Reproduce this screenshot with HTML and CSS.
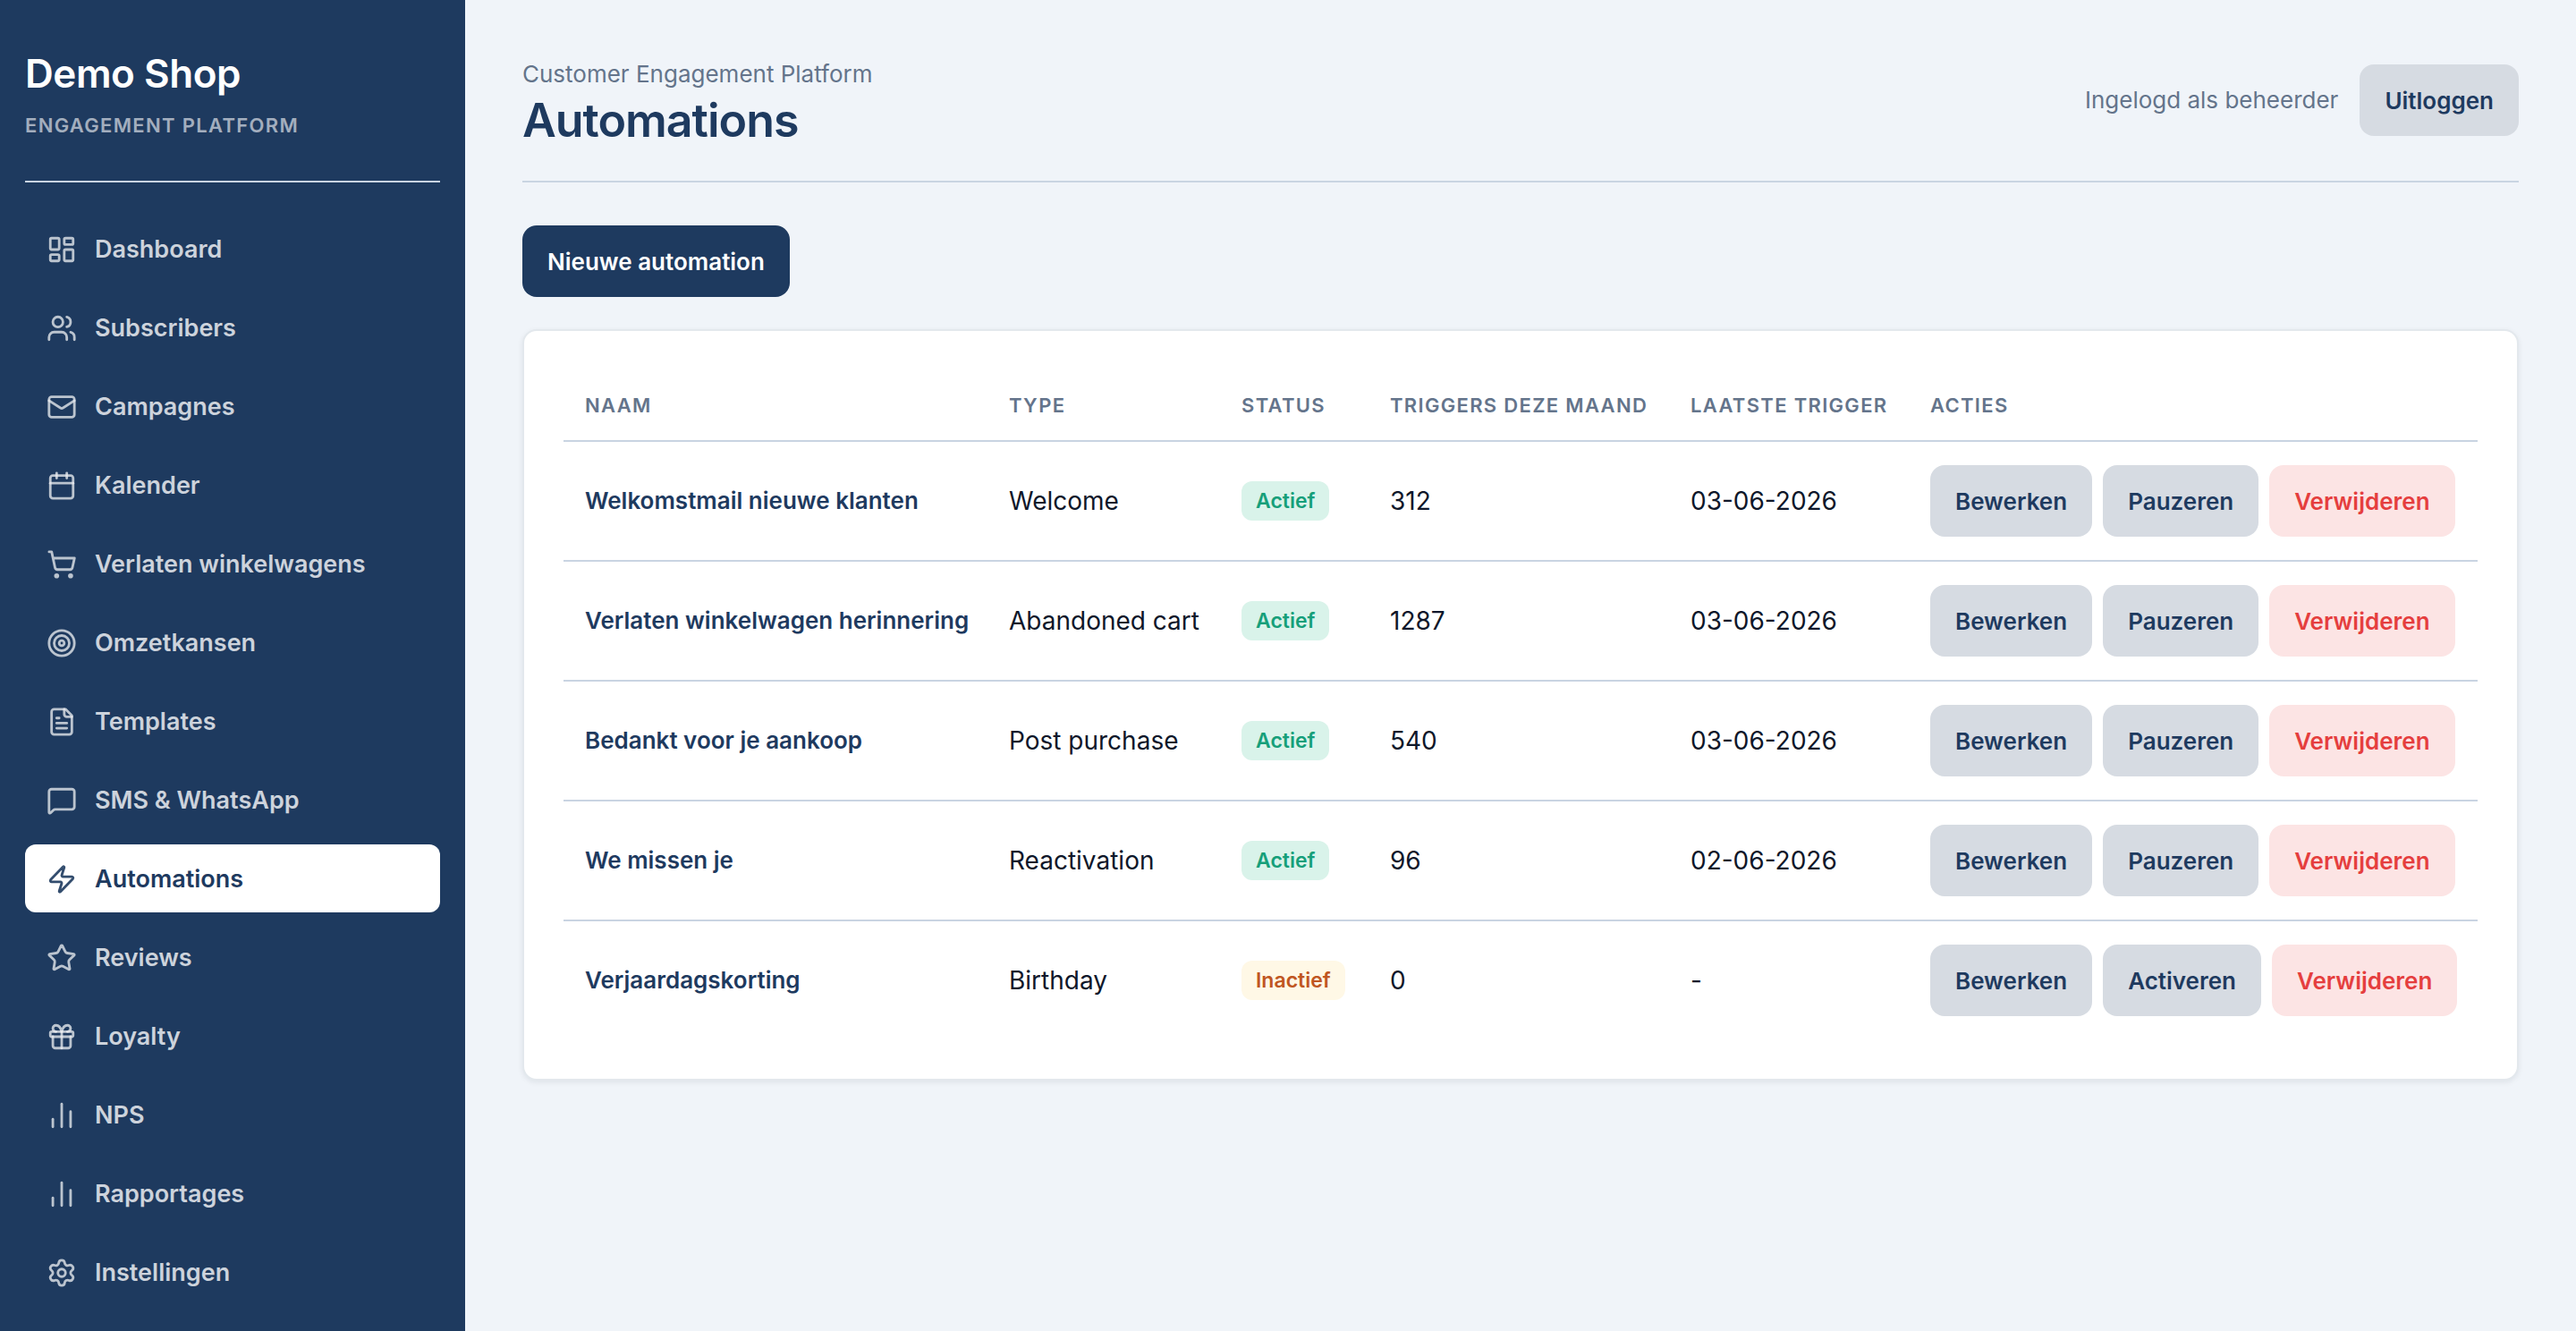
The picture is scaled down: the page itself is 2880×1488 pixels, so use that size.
FILE: index.html
```html
<!DOCTYPE html>
<html lang="nl">
<head>
<meta charset="utf-8">
<meta name="viewport" content="width=device-width, initial-scale=1">
<title>Automations - Demo Shop</title>
<link rel="stylesheet" href="styles.css">
</head>
<body>
<div class="app">
  <aside class="sidebar">
    <div class="brand">
      <p class="brand-name">Demo Shop</p>
      <p class="brand-tag">Engagement platform</p>
    </div>
    <nav class="nav" aria-label="Hoofdmenu">
      <a class="nav-link" href="#dashboard">
        <svg class="icon" viewBox="0 0 24 24"><rect x="3" y="3" width="7" height="9" rx="1"/><rect x="14" y="3" width="7" height="5" rx="1"/><rect x="14" y="12" width="7" height="9" rx="1"/><rect x="3" y="16" width="7" height="5" rx="1"/></svg>
        Dashboard
      </a>
      <a class="nav-link" href="#subscribers">
        <svg class="icon" viewBox="0 0 24 24"><path d="M16 21v-2a4 4 0 0 0-4-4H6a4 4 0 0 0-4 4v2"/><circle cx="9" cy="7" r="4"/><path d="M22 21v-2a4 4 0 0 0-3-3.87"/><path d="M16 3.13a4 4 0 0 1 0 7.75"/></svg>
        Subscribers
      </a>
      <a class="nav-link" href="#campagnes">
        <svg class="icon" viewBox="0 0 24 24"><rect x="2" y="4" width="20" height="16" rx="2"/><path d="m22 7-8.97 5.7a1.94 1.94 0 0 1-2.06 0L2 7"/></svg>
        Campagnes
      </a>
      <a class="nav-link" href="#kalender">
        <svg class="icon" viewBox="0 0 24 24"><path d="M8 2v4"/><path d="M16 2v4"/><rect x="3" y="4" width="18" height="18" rx="2"/><path d="M3 10h18"/></svg>
        Kalender
      </a>
      <a class="nav-link" href="#winkelwagens">
        <svg class="icon" viewBox="0 0 24 24"><circle cx="8" cy="21" r="1"/><circle cx="19" cy="21" r="1"/><path d="M2.05 2.05h2l2.66 12.42a2 2 0 0 0 2 1.58h9.78a2 2 0 0 0 1.95-1.57l1.65-7.43H5.12"/></svg>
        Verlaten winkelwagens
      </a>
      <a class="nav-link" href="#omzetkansen">
        <svg class="icon" viewBox="0 0 24 24"><circle cx="12" cy="12" r="10"/><circle cx="12" cy="12" r="6"/><circle cx="12" cy="12" r="2"/></svg>
        Omzetkansen
      </a>
      <a class="nav-link" href="#templates">
        <svg class="icon" viewBox="0 0 24 24"><path d="M15 2H6a2 2 0 0 0-2 2v16a2 2 0 0 0 2 2h12a2 2 0 0 0 2-2V7Z"/><path d="M14 2v4a2 2 0 0 0 2 2h4"/><path d="M10 9H8"/><path d="M16 13H8"/><path d="M16 17H8"/></svg>
        Templates
      </a>
      <a class="nav-link" href="#sms-whatsapp">
        <svg class="icon" viewBox="0 0 24 24"><path d="M22 17a2 2 0 0 1-2 2H6.828a2 2 0 0 0-1.414.586l-2.202 2.202A.71.71 0 0 1 2 21.286V5a2 2 0 0 1 2-2h16a2 2 0 0 1 2 2z"/></svg>
        SMS &amp; WhatsApp
      </a>
      <a class="nav-link is-active" href="#automations" aria-current="page">
        <svg class="icon" viewBox="0 0 24 24"><path d="M4 14a1 1 0 0 1-.78-1.63l9.9-10.2a.5.5 0 0 1 .86.46l-1.92 6.02A1 1 0 0 0 13 10h7a1 1 0 0 1 .78 1.63l-9.9 10.2a.5.5 0 0 1-.86-.46l1.92-6.02A1 1 0 0 0 11 14z"/></svg>
        Automations
      </a>
      <a class="nav-link" href="#reviews">
        <svg class="icon" viewBox="0 0 24 24"><path d="M11.525 2.295a.53.53 0 0 1 .95 0l2.31 4.679a2.123 2.123 0 0 0 1.595 1.16l5.166.756a.53.53 0 0 1 .294.904l-3.736 3.638a2.123 2.123 0 0 0-.611 1.878l.882 5.14a.53.53 0 0 1-.771.56l-4.618-2.428a2.122 2.122 0 0 0-1.973 0L6.396 21.01a.53.53 0 0 1-.77-.56l.881-5.139a2.122 2.122 0 0 0-.611-1.879L2.16 9.795a.53.53 0 0 1 .294-.906l5.165-.755a2.122 2.122 0 0 0 1.597-1.16z"/></svg>
        Reviews
      </a>
      <a class="nav-link" href="#loyalty">
        <svg class="icon" viewBox="0 0 24 24"><rect x="3" y="8" width="18" height="4" rx="1"/><path d="M12 8v13"/><path d="M19 12v7a2 2 0 0 1-2 2H7a2 2 0 0 1-2-2v-7"/><path d="M7.5 8a2.5 2.5 0 0 1 0-5A4.8 8 0 0 1 12 8a4.8 8 0 0 1 4.5-5 2.5 2.5 0 0 1 0 5"/></svg>
        Loyalty
      </a>
      <a class="nav-link" href="#nps">
        <svg class="icon" viewBox="0 0 24 24"><path d="M5 21v-6"/><path d="M12 21V3"/><path d="M19 21V9"/></svg>
        NPS
      </a>
      <a class="nav-link" href="#rapportages">
        <svg class="icon" viewBox="0 0 24 24"><path d="M5 21v-6"/><path d="M12 21V3"/><path d="M19 21V9"/></svg>
        Rapportages
      </a>
      <a class="nav-link" href="#instellingen">
        <svg class="icon" viewBox="0 0 24 24"><path d="M9.671 4.136a2.34 2.34 0 0 1 4.659 0 2.34 2.34 0 0 0 3.319 1.915 2.34 2.34 0 0 1 2.33 4.033 2.34 2.34 0 0 0 0 3.831 2.34 2.34 0 0 1-2.33 4.033 2.34 2.34 0 0 0-3.319 1.915 2.34 2.34 0 0 1-4.659 0 2.34 2.34 0 0 0-3.32-1.915 2.34 2.34 0 0 1-2.33-4.033 2.34 2.34 0 0 0 0-3.831A2.34 2.34 0 0 1 6.35 6.051a2.34 2.34 0 0 0 3.319-1.915"/><circle cx="12" cy="12" r="3"/></svg>
        Instellingen
      </a>
    </nav>
  </aside>

  <main class="main">
    <header class="page-header">
      <div class="page-heading">
        <p class="eyebrow">Customer Engagement Platform</p>
        <h1 class="page-title">Automations</h1>
      </div>
      <div class="account">
        <span class="account-label">Ingelogd als beheerder</span>
        <button class="btn btn-secondary" type="button">Uitloggen</button>
      </div>
    </header>

    <a class="btn btn-primary" href="#nieuw">Nieuwe automation</a>

    <section class="card">
      <table class="table">
        <colgroup>
          <col class="col-name">
          <col class="col-type">
          <col class="col-status">
          <col class="col-triggers">
          <col class="col-last">
          <col>
        </colgroup>
        <thead>
          <tr>
            <th scope="col">Naam</th>
            <th scope="col">Type</th>
            <th scope="col">Status</th>
            <th scope="col">Triggers deze maand</th>
            <th scope="col">Laatste trigger</th>
            <th scope="col">Acties</th>
          </tr>
        </thead>
        <tbody>
          <tr>
            <td class="name">Welkomstmail nieuwe klanten</td>
            <td>Welcome</td>
            <td><span class="badge badge-active">Actief</span></td>
            <td>312</td>
            <td>03-06-2026</td>
            <td><div class="actions"><a class="btn btn-secondary" href="#bewerken">Bewerken</a><button class="btn btn-secondary" type="button">Pauzeren</button><button class="btn btn-danger" type="button">Verwijderen</button></div></td>
          </tr>
          <tr>
            <td class="name">Verlaten winkelwagen herinnering</td>
            <td>Abandoned cart</td>
            <td><span class="badge badge-active">Actief</span></td>
            <td>1287</td>
            <td>03-06-2026</td>
            <td><div class="actions"><a class="btn btn-secondary" href="#bewerken">Bewerken</a><button class="btn btn-secondary" type="button">Pauzeren</button><button class="btn btn-danger" type="button">Verwijderen</button></div></td>
          </tr>
          <tr>
            <td class="name">Bedankt voor je aankoop</td>
            <td>Post purchase</td>
            <td><span class="badge badge-active">Actief</span></td>
            <td>540</td>
            <td>03-06-2026</td>
            <td><div class="actions"><a class="btn btn-secondary" href="#bewerken">Bewerken</a><button class="btn btn-secondary" type="button">Pauzeren</button><button class="btn btn-danger" type="button">Verwijderen</button></div></td>
          </tr>
          <tr>
            <td class="name">We missen je</td>
            <td>Reactivation</td>
            <td><span class="badge badge-active">Actief</span></td>
            <td>96</td>
            <td>02-06-2026</td>
            <td><div class="actions"><a class="btn btn-secondary" href="#bewerken">Bewerken</a><button class="btn btn-secondary" type="button">Pauzeren</button><button class="btn btn-danger" type="button">Verwijderen</button></div></td>
          </tr>
          <tr>
            <td class="name">Verjaardagskorting</td>
            <td>Birthday</td>
            <td><span class="badge badge-inactive">Inactief</span></td>
            <td>0</td>
            <td>-</td>
            <td><div class="actions"><a class="btn btn-secondary" href="#bewerken">Bewerken</a><button class="btn btn-secondary" type="button">Activeren</button><button class="btn btn-danger" type="button">Verwijderen</button></div></td>
          </tr>
        </tbody>
      </table>
    </section>
  </main>
</div>
</body>
</html>
```
FILE: styles.css
```css
:root {
  --navy: #1e3a5f;
  --ink: #0f172a;
  --muted: #64748b;
  --line: #c9d4e2;
  --page: #f0f4f9;
}

*,
*::before,
*::after {
  box-sizing: border-box;
}

body {
  margin: 0;
  background: var(--page);
  color: var(--ink);
  font-family: Inter, "Liberation Sans", sans-serif;
  font-size: 28px;
  line-height: 44px;
}

p,
h1 {
  margin: 0;
}

.app {
  display: flex;
  min-height: 100vh;
}

/* Sidebar */
.sidebar {
  flex: 0 0 520px;
  padding: 56px 28px 28px;
  background: var(--navy);
}

.brand {
  padding-bottom: 48px;
  margin-bottom: 36px;
  border-bottom: 2px solid var(--line);
}

.brand-name {
  color: #fff;
  font-size: 44px;
  font-weight: 600;
  line-height: 52px;
  letter-spacing: -0.01em;
}

.brand-tag {
  margin-top: 18px;
  color: rgba(255, 255, 255, 0.6);
  font-size: 22px;
  font-weight: 600;
  line-height: 28px;
  letter-spacing: 0.06em;
  text-transform: uppercase;
}

.nav {
  display: flex;
  flex-direction: column;
  gap: 12px;
}

.nav-link {
  display: flex;
  align-items: center;
  gap: 20px;
  padding: 17px 24px 15px;
  border-radius: 12px;
  color: rgba(255, 255, 255, 0.78);
  font-size: 27px;
  font-weight: 600;
  text-decoration: none;
}

.nav-link.is-active {
  background: #fff;
  color: var(--navy);
}

.icon {
  flex: none;
  width: 34px;
  height: 34px;
  fill: none;
  stroke: currentColor;
  stroke-width: 2;
  stroke-linecap: round;
  stroke-linejoin: round;
  opacity: 0.9;
}

/* Page */
.main {
  flex: 1;
  min-width: 0;
  padding: 61px 64px;
}

.page-header {
  display: flex;
  align-items: center;
  justify-content: space-between;
  padding-bottom: 39px;
  margin-bottom: 48px;
  border-bottom: 2px solid var(--line);
}

.page-heading {
  display: flex;
  flex-direction: column;
  gap: 4px;
  padding-top: 2px;
}

.eyebrow,
.account-label {
  color: var(--muted);
  font-size: 26px;
  line-height: 40px;
}

.page-title {
  color: var(--navy);
  font-size: 52px;
  font-weight: 600;
  line-height: 56px;
  letter-spacing: -0.02em;
}

.account {
  display: flex;
  align-items: center;
  gap: 24px;
}

.btn {
  display: inline-block;
  padding: 21px 28px 19px;
  border: 0;
  border-radius: 16px;
  font: inherit;
  font-size: 26px;
  font-weight: 600;
  line-height: 40px;
  text-decoration: none;
  vertical-align: top;
  white-space: nowrap;
  cursor: pointer;
}

.btn-primary {
  background: var(--navy);
  color: #fff;
}

.btn-secondary {
  background: #d6dbe2;
  color: var(--navy);
}

.btn-danger {
  background: #fce4e4;
  color: #e53e3e;
}

/* Automations table */
.card {
  margin-top: 36px;
  padding: 44px;
  border: 2px solid #e3e8ed;
  border-radius: 16px;
  background: #fff;
  box-shadow: 0 2px 6px rgba(15, 23, 42, 0.08);
}

.table {
  width: 100%;
  table-layout: fixed;
  border-collapse: separate;
  border-spacing: 0;
}

.col-name {
  width: 474px;
}

.col-type {
  width: 260px;
}

.col-status {
  width: 166px;
}

.col-triggers {
  width: 336px;
}

.col-last {
  width: 268px;
}

th,
td {
  padding: 26px 0 26px 24px;
  border-bottom: 2px solid var(--line);
  text-align: left;
  white-space: nowrap;
}

th {
  color: var(--muted);
  font-size: 22px;
  font-weight: 600;
  line-height: 26px;
  letter-spacing: 0.06em;
  text-transform: uppercase;
}

tbody tr:last-child td {
  border-bottom: 0;
}

.name {
  color: var(--navy);
  font-size: 26px;
  font-weight: 600;
}

.badge {
  display: block;
  width: fit-content;
  padding: 6px 16px;
  border-radius: 12px;
  font-size: 23px;
  font-weight: 600;
  line-height: 32px;
}

.badge-active {
  background: #d9f3ea;
  color: #169f7a;
}

.badge-inactive {
  background: #fff8e6;
  color: #c05621;
}

.actions {
  display: flex;
  gap: 12px;
}
```
